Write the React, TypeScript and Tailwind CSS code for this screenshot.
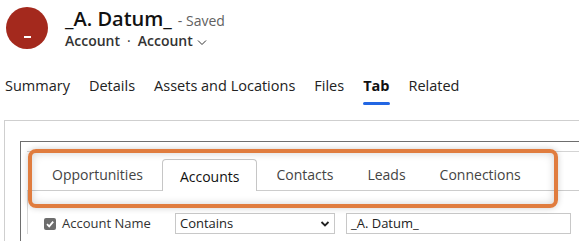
import React from 'react';

const tabs = ['Summary', 'Details', 'Assets and Locations', 'Files', 'Tab', 'Related'];
const subTabs = ['Opportunities', 'Accounts', 'Contacts', 'Leads', 'Connections'];

export default function App() {
  return (
    <div className="w-[579px] h-[241px] overflow-hidden bg-white relative" style={{ fontFamily: '"Segoe UI", "Open Sans", sans-serif' }}>
      {/* Header */}
      <div className="flex items-start pl-[6px] pt-[7px] h-[49px]">
        <div className="w-[42px] h-[42px] rounded-full bg-[#a4291d] flex items-center justify-center">
          <div className="w-[7px] h-[2px] bg-white mt-[17px]" />
        </div>
        <div className="ml-[17px] -mt-[1px]">
          <div className="flex items-baseline">
            <span className="text-[20px] font-semibold text-[#111] leading-[26px]">_A. Datum_</span>
            <span className="ml-[6px] text-[14px] text-[#616161]">- Saved</span>
          </div>
          <div className="flex items-center text-[14px] font-semibold text-[#333] leading-[18px]">
            <span>Account</span>
            <span className="mx-[7px] font-normal">·</span>
            <span>Account</span>
            <svg width="12" height="12" viewBox="0 0 12 12" className="ml-[3px] mt-[2px]">
              <path d="M2 4.5 L6 8.5 L10 4.5" fill="none" stroke="#333" strokeWidth="1" />
            </svg>
          </div>
        </div>
      </div>

      {/* Tabs */}
      <div className="flex pl-[5px] mt-[27px] gap-[19px] text-[14.5px] leading-[20px] text-[#222]">
        {tabs.map((t) => (
          <div key={t} className="flex flex-col items-center">
            <span className={t === 'Tab' ? 'font-bold text-[#111]' : ''}>{t}</span>
            <div className={`h-[3px] w-full rounded-full mt-[6px] ${t === 'Tab' ? 'bg-[#2266e3]' : 'bg-transparent'}`} />
          </div>
        ))}
      </div>

      {/* Content */}
      <div className="ml-[4px] mt-[15px] border-t border-l border-[#cfcfcf] pl-[15px] pt-[20px] h-[200px]">
        <div className="border-t border-l border-[#6e6e6e] h-full pt-[9px] pl-[6px]">
          <div className="border-t border-[#d4d4d4]">
            <div className="flex items-end h-[39px] border-b border-[#cccccc] pl-[8px] text-[14px] leading-[20px] text-[#444]">
              {subTabs.map((t) => (
                <div
                  key={t}
                  className={
                    t === 'Accounts'
                      ? 'h-[32px] mx-[2px] px-[17px] pt-[2px] flex items-center border border-b-0 border-[#c6c6c6] rounded-t-[4px] bg-white text-[#111] -mb-px'
                      : 'h-[32px] px-[17px] pt-[2px] flex items-center'
                  }
                >
                  {t}
                </div>
              ))}
            </div>
            <div className="border-l border-[#d8d8d8] flex items-center pt-[22px] pl-[16px] text-[13px] text-[#333]">
              <div className="w-[12px] h-[12px] rounded-[2px] bg-[#6d6d6d] flex items-center justify-center">
                <svg width="10" height="10" viewBox="0 0 10 10">
                  <path d="M2 5.2 L4.2 7.4 L8.2 2.6" fill="none" stroke="#fff" strokeWidth="1.8" />
                </svg>
              </div>
              <span className="ml-[6px] w-[113px]">Account Name</span>
              <div className="w-[160px] h-[21px] border border-[#c8c8c8] flex items-center justify-between px-[4px]">
                <span className="text-[#222]">Contains</span>
                <svg width="10" height="8" viewBox="0 0 10 8">
                  <path d="M1.5 2 L5 5.5 L8.5 2" fill="none" stroke="#222" strokeWidth="1.8" />
                </svg>
              </div>
              <div className="ml-[11px] w-[225px] h-[21px] border border-[#c8c8c8] flex items-center px-[4px] text-[#222]">
                _A. Datum_
              </div>
            </div>
          </div>
        </div>
      </div>

      {/* Highlight annotation */}
      <div className="absolute left-[28px] top-[149px] w-[530px] h-[59px] border-[4px] border-[#e07c3e] rounded-[8px] shadow-[inset_0_0_8px_rgba(0,0,0,0.18),0_0_6px_rgba(0,0,0,0.2)]" />
    </div>
  );
}
